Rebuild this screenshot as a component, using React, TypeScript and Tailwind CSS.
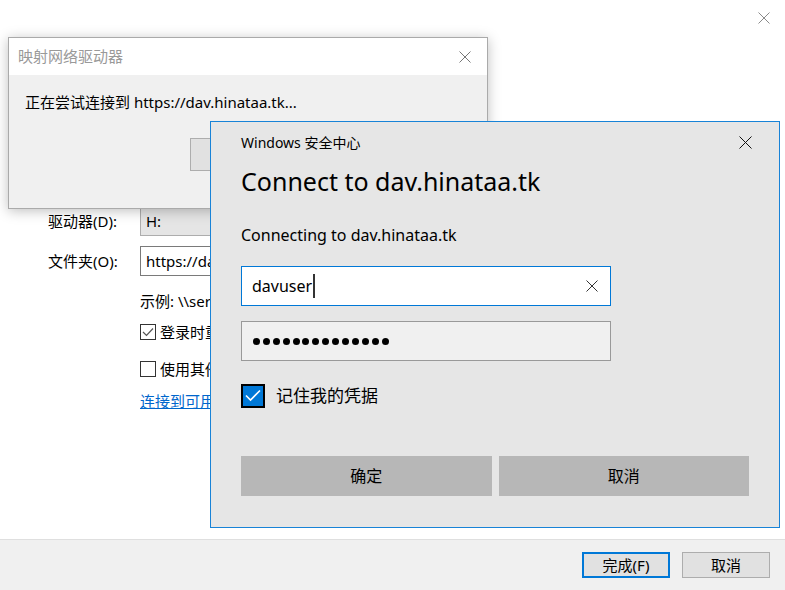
import React from "react";

const XIcon = ({ size, color, sw = 1 }: { size: number; color: string; sw?: number }) => (
  <svg width={size} height={size} viewBox={`0 0 ${size} ${size}`} fill="none">
    <path d={`M0.5 0.5 L${size - 0.5} ${size - 0.5} M${size - 0.5} 0.5 L0.5 ${size - 0.5}`} stroke={color} strokeWidth={sw} />
  </svg>
);

export default function App() {
  return (
    <div className="relative w-[785px] h-[590px] overflow-hidden bg-white text-black font-['Noto_Sans','Noto_Sans_CJK_SC',sans-serif]">
      {/* main window */}
      <div className="flex h-full flex-col">
        <div className="flex h-[36px] items-center justify-end pr-[15px]">
          <XIcon size={12} color="#8a8a8a" />
        </div>
        <div className="flex flex-1 flex-col pl-[48px] pt-[170px] text-[15px]">
          <div className="flex items-center">
            <div className="w-[92px]">驱动器(D):</div>
            <div className="flex h-[30px] w-[320px] items-center border border-[#adadad] bg-[#e5e5e5] pl-[5px]">H:</div>
          </div>
          <div className="mt-[10px] flex items-center">
            <div className="w-[92px]">文件夹(O):</div>
            <div className="flex h-[30px] w-[320px] items-center border border-[#7a7a7a] bg-white pl-[5px]">https://dav.hinataa.tk</div>
          </div>
          <div className="ml-[92px] mt-[14px] leading-[22px]">示例: \\server\share</div>
          <div className="ml-[92px] mt-[9px] flex items-center gap-[4px]">
            <div className="flex h-[16px] w-[16px] items-center justify-center border border-[#333]">
              <svg width="12" height="10" viewBox="0 0 12 10" fill="none">
                <path d="M1 5 L4.5 8.5 L11 1.5" stroke="#555" strokeWidth="1.2" />
              </svg>
            </div>
            <span>登录时重新连接(R)</span>
          </div>
          <div className="ml-[92px] mt-[14px] flex items-center gap-[4px]">
            <div className="h-[16px] w-[16px] border border-[#333]" />
            <span>使用其他凭据连接(C)</span>
          </div>
          <div className="ml-[92px] mt-[10px] text-[#0066cc] underline">连接到可用于存储文档和图片的网站。</div>
        </div>
        <div className="flex h-[51px] items-center justify-end gap-[12px] border-t border-[#dfdfdf] bg-[#f0f0f0] pr-[15px] text-[15px]">
          <div className="flex h-[26px] w-[88px] items-center justify-center border-2 border-[#0078d7] bg-[#e1e1e1]">完成(F)</div>
          <div className="flex h-[26px] w-[88px] items-center justify-center border border-[#adadad] bg-[#e1e1e1]">取消</div>
        </div>
      </div>

      {/* back dialog */}
      <div className="absolute left-[8px] top-[37px] flex h-[172px] w-[480px] flex-col border border-[#aaaaaa] bg-[#f0f0f0] text-[15px] shadow-[0_2px_12px_rgba(0,0,0,0.25)]">
        <div className="flex h-[37px] items-center justify-between bg-white pl-[9px] pr-[16px] text-[#999]">
          <span>映射网络驱动器</span>
          <XIcon size={12} color="#777" />
        </div>
        <div className="pl-[16px] pt-[16px] leading-[22px]">正在尝试连接到 https://dav.hinataa.tk...</div>
        <div className="ml-[181px] mt-[25px] h-[33px] w-[100px] border border-[#adadad] bg-[#e1e1e1]" />
      </div>

      {/* security dialog */}
      <div className="absolute left-[210px] top-[121px] flex h-[407px] w-[570px] flex-col border border-[#1883d7] bg-[#e6e6e6] px-[30px]">
        <div className="mt-[10px] flex items-center justify-between">
          <span className="text-[14px]">Windows 安全中心</span>
          <span className="-mr-[3px]"><XIcon size={13} color="#111" /></span>
        </div>
        <div className="mt-[12px] text-[25px] leading-[32px]">Connect to dav.hinataa.tk</div>
        <div className="mt-[27px] text-[16px] leading-[22px]">Connecting to dav.hinataa.tk</div>
        <div className="mt-[20px] flex h-[40px] w-[370px] items-center border border-[#0078d7] bg-white pl-[10px] pr-[12px] text-[16px]">
          <span>davuser</span>
          <span className="ml-[1px] h-[24px] w-[2px] bg-[#333]" />
          <span className="flex-1" />
          <XIcon size={12} color="#333" />
        </div>
        <div className="mt-[15px] flex h-[40px] w-[370px] items-center gap-[2.9px] border border-[#999] bg-[#f0f0f0] pl-[11px]">
          {Array.from({ length: 14 }).map((_, i) => (
            <span key={i} className="h-[7px] w-[7px] rounded-full bg-black" />
          ))}
        </div>
        <div className="mt-[22px] flex items-center gap-[11px]">
          <div className="flex h-[24px] w-[24px] items-center justify-center border-2 border-black bg-[#0078d7]">
            <svg width="16" height="13" viewBox="0 0 16 13" fill="none">
              <path d="M1 6.5 L5.5 11 L15 1.5" stroke="white" strokeWidth="1.6" />
            </svg>
          </div>
          <span className="text-[17px]">记住我的凭据</span>
        </div>
        <div className="mt-[47px] flex gap-[7px] text-[16px]">
          <div className="flex h-[40px] w-[251px] items-center justify-center bg-[#b7b7b7]">确定</div>
          <div className="flex h-[40px] w-[251px] items-center justify-center bg-[#b7b7b7]">取消</div>
        </div>
      </div>
    </div>
  );
}
